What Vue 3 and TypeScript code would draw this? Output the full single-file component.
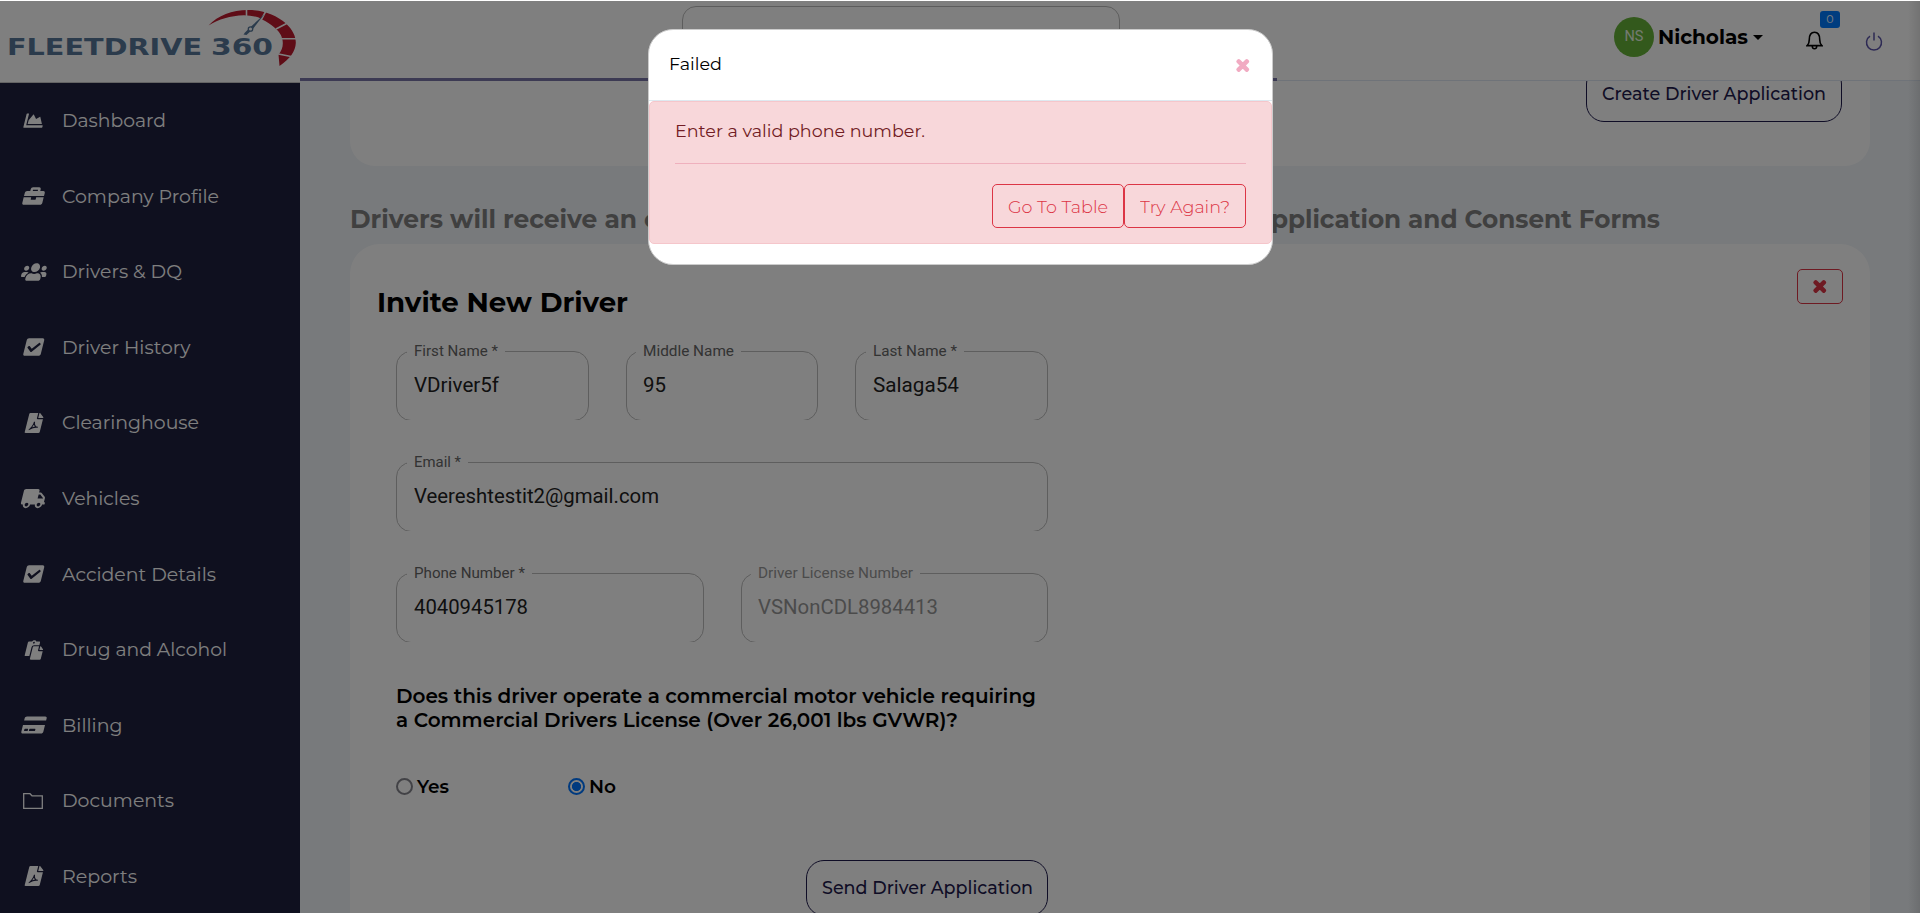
<script setup lang="ts">
import { ref } from 'vue'

type Shape = { box: string; width: number; height: number; paths: string[]; marks?: string; slant: boolean; line?: boolean }
type NavItem = { label: string; width: number; icon: string }

// Sets a run of text to a given advance width.
const vFit = {
  mounted(el: HTMLElement, binding: { value: number }) {
    const natural = el.getBoundingClientRect().width
    if (!natural) return
    el.style.transform = `scaleX(${binding.value / natural})`
    el.style.marginRight = `${binding.value - natural}px`
  },
}

const pdf: Shape = {
  box: '0 0 384 512', width: 15, height: 20, slant: true,
  paths: [
    'M224 136V0H24C10.7 0 0 10.7 0 24v464c0 13.3 10.7 24 24 24h336c13.300 0 24-10.700 24-24V160H248c-13.200 0-24-10.800-24-24z',
    'M384 121.900v6.100H256V0h6.100c6.400 0 12.500 2.500 17 7l97.900 98c4.500 4.500 7 10.600 7 16.900z',
  ],
  marks: 'M88 432c40-20 100-118 96-208 6 90 60 148 120 142-70-12-130 2-200 50',
}

const icons: Record<string, Shape> = {
  pdf,
  chart: {
    box: '0 0 512 512', width: 19, height: 19, slant: true,
    paths: ['M500 384c6.600 0 12 5.400 12 12v40c0 6.600-5.400 12-12 12H12c-6.600 0-12-5.400-12-12V76c0-6.600 5.400-12 12-12h40c6.600 0 12 5.400 12 12v308h436zM372.700 159.500L288 216l-85.300-113.700c-5.100-6.800-15.500-6.300-19.900 1L96 248v104h384l-89.900-187.800c-3.200-6.500-11.400-8.700-17.400-4.700z'],
  },
  briefcase: {
    box: '0 0 512 512', width: 20, height: 20, slant: true,
    paths: ['M320 336c0 8.840-7.160 16-16 16h-96c-8.840 0-16-7.160-16-16v-48H0v144c0 25.600 22.400 48 48 48h416c25.600 0 48-22.400 48-48V288H320v48zm144-208h-80V80c0-25.600-22.400-48-48-48H176c-25.600 0-48 22.400-48 48v48H48c-25.600 0-48 22.400-48 48v80h512v-80c0-25.600-22.400-48-48-48zm-144 0H192V96h128v32z'],
  },
  users: {
    box: '0 0 640 512', width: 25, height: 20, slant: true,
    paths: ['M96 224c35.300 0 64-28.700 64-64s-28.700-64-64-64-64 28.700-64 64 28.700 64 64 64zm448 0c35.300 0 64-28.700 64-64s-28.700-64-64-64-64 28.700-64 64 28.700 64 64 64zm32 32h-64c-17.600 0-33.500 7.100-45.100 18.600 40.300 22.100 68.900 62 75.100 109.400h66c17.700 0 32-14.300 32-32v-32c0-35.300-28.700-64-64-64zm-256 0c61.900 0 112-50.100 112-112S381.900 32 320 32 208 82.100 208 144s50.100 112 112 112zm76.800 32h-8.300c-20.800 10-43.900 16-68.500 16s-47.600-6-68.500-16h-8.300C179.600 288 128 339.600 128 403.200V432c0 26.500 21.500 48 48 48h288c26.500 0 48-21.500 48-48v-28.800c0-63.600-51.600-115.200-115.200-115.200zm-223.700-13.400C161.500 263.100 145.600 256 128 256H64c-35.300 0-64 28.700-64 64v32c0 17.700 14.300 32 32 32h65.900c6.300-47.400 34.900-87.300 75.200-109.400z'],
  },
  check: {
    box: '0 0 448 512', width: 17.5, height: 20, slant: true,
    paths: ['M400 480H48c-26.510 0-48-21.490-48-48V80c0-26.510 21.490-48 48-48h352c26.510 0 48 21.490 48 48v352c0 26.510-21.490 48-48 48zm-204.686-98.059l184-184c6.248-6.248 6.248-16.379 0-22.627l-22.627-22.627c-6.248-6.248-16.379-6.249-22.628 0L184 302.745l-70.059-70.059c-6.248-6.248-16.379-6.248-22.628 0l-22.627 22.627c-6.248 6.248-6.248 16.379 0 22.627l104 104c6.249 6.250 16.379 6.250 22.628.001z'],
  },
  truck: {
    box: '0 0 640 512', width: 24, height: 19.200, slant: true,
    paths: ['M624 352h-16V243.900c0-12.700-5.100-24.900-14.100-33.900L494 110.100c-9-9-21.200-14.100-33.900-14.100H416V48c0-26.500-21.500-48-48-48H48C21.500 0 0 21.500 0 48v320c0 26.500 21.500 48 48 48h16c0 53 43 96 96 96s96-43 96-96h128c0 53 43 96 96 96s96-43 96-96h48c8.800 0 16-7.200 16-16v-32c0-8.800-7.200-16-16-16zM160 464c-26.500 0-48-21.500-48-48s21.500-48 48-48 48 21.500 48 48-21.500 48-48 48zm320 0c-26.500 0-48-21.500-48-48s21.500-48 48-48 48 21.500 48 48-21.500 48-48 48zm80-208H416V144h44.100l99.900 99.900V256z'],
  },
  paste: {
    box: '0 0 448 512', width: 17, height: 20, slant: true,
    paths: ['M128 184c0-30.879 25.122-56 56-56h136V56c0-13.255-10.745-24-24-24h-80.610C204.306 12.890 183.637 0 160 0s-44.306 12.890-55.390 32H24C10.745 32 0 42.745 0 56v336c0 13.255 10.745 24 24 24h104V184zm32-144c13.255 0 24 10.745 24 24s-10.745 24-24 24-24-10.745-24-24 10.745-24 24-24zm184 248h104v200c0 13.255-10.745 24-24 24H184c-13.255 0-24-10.745-24-24V184c0-13.255 10.745-24 24-24h136v104c0 13.200 10.800 24 24 24zm104-38.059V256h-96v-96h6.059a24 24 0 0 1 16.970 7.029l65.941 65.941a24.002 24.002 0 0 1 7.030 16.971z'],
  },
  card: {
    box: '0 0 576 512', width: 22, height: 20, slant: true,
    paths: ['M0 432c0 26.500 21.500 48 48 48h480c26.500 0 48-21.500 48-48V256H0v176zm192-68c0-6.600 5.400-12 12-12h136c6.600 0 12 5.400 12 12v40c0 6.600-5.400 12-12 12H204c-6.600 0-12-5.400-12-12v-40zm-128 0c0-6.600 5.400-12 12-12h72c6.600 0 12 5.400 12 12v40c0 6.600-5.400 12-12 12H76c-6.600 0-12-5.400-12-12v-40zM576 80v60H0V80c0-26.500 21.500-48 48-48h480c26.500 0 48 21.500 48 48z'],
  },
  folder: { box: '0 0 20 16', width: 20, height: 16, slant: false, line: true, paths: ['M.7.700h6.300l2 2.100h10.300v12.500H.7z'] },
}

const nav: NavItem[] = [
  { label: 'Dashboard', width: 104, icon: 'chart' },
  { label: 'Company Profile', width: 157, icon: 'briefcase' },
  { label: 'Drivers & DQ', width: 120, icon: 'users' },
  { label: 'Driver History', width: 128.500, icon: 'check' },
  { label: 'Clearinghouse', width: 137, icon: 'pdf' },
  { label: 'Vehicles', width: 77.500, icon: 'truck' },
  { label: 'Accident Details', width: 154, icon: 'check' },
  { label: 'Drug and Alcohol', width: 165, icon: 'paste' },
  { label: 'Billing', width: 60.500, icon: 'card' },
  { label: 'Documents', width: 112, icon: 'folder' },
  { label: 'Reports', width: 75, icon: 'pdf' },
]

const rows = [
  [
    { label: 'First Name *', value: 'VDriver5f', span: 'third', lw: 84, vw: 85 },
    { label: 'Middle Name', value: '95', span: 'third', lw: 91, vw: 23 },
    { label: 'Last Name *', value: 'Salaga54', span: 'third', lw: 84, vw: 86 },
  ],
  [{ label: 'Email *', value: 'Veereshtestit2@gmail.com', span: 'full', lw: 47, vw: 245 }],
  [
    { label: 'Phone Number *', value: '4040945178', span: 'half', lw: 111, vw: 114 },
    { label: 'Driver License Number', value: 'VSNonCDL8984413', span: 'half', lw: 155, vw: 180, muted: true },
  ],
]

const commercial = ref<'yes' | 'no'>('no')
const cross = 'M242.720 256l100.070-100.070c12.280-12.280 12.280-32.190 0-44.480l-22.240-22.240c-12.280-12.280-32.190-12.280-44.480 0L176 189.280 75.930 89.210c-12.280-12.280-32.190-12.280-44.480 0L9.210 111.450c-12.280 12.280-12.280 32.190 0 44.480L109.280 256 9.210 356.070c-12.280 12.280-12.280 32.190 0 44.480l22.240 22.240c12.280 12.280 32.200 12.280 44.480 0L176 322.720l100.070 100.070c12.280 12.280 32.200 12.280 44.480 0l22.240-22.240c12.280-12.280 12.280-32.190 0-44.480L242.720 256z'
</script>

<template>
  <div class="app">
    <aside class="sidebar">
      <div class="brand">
        <svg class="logo" width="300" height="82" viewBox="0 0 300 82">
          <g class="wordmark">
            <text x="7" y="54.500" textLength="195" lengthAdjust="spacingAndGlyphs">FLEETDRIVE</text>
            <text x="211" y="54.500" textLength="62" lengthAdjust="spacingAndGlyphs">360</text>
          </g>
          <path class="dial" d="M208.500 25.500C218 15.500 232 10 248 10C263 10 276 15 286 23.500C293 30 296 37 295.800 43C295.500 51 290 59 279.500 66L278.500 54.500C282 50 283.500 46 282.500 40C281.500 35 279.500 32 275 28C271 24.500 267 21.500 261 19C258 16.500 250 15.500 244 15.200C230 15.800 219 19 208.500 25.500Z" />
          <path class="ticks" d="M246.500 8V18M267 9L260 22M288.500 22.500L276 29M298 38.800H281M291 56.500L276 53.500" />
          <path class="needle" d="M264.500 14L252.500 29.500L246.500 35L243.500 34.500L245 32.500L250 27.500Z" />
          <circle class="pivot" cx="250.500" cy="29" r="2.200" />
        </svg>
      </div>
      <nav class="menu">
        <a v-for="item in nav" :key="item.label" class="menu-item">
          <span class="menu-icon">
            <svg :class="{ slant: icons[item.icon].slant, line: icons[item.icon].line }" :width="icons[item.icon].width" :height="icons[item.icon].height" :viewBox="icons[item.icon].box">
              <path v-for="d in icons[item.icon].paths" :key="d" :d="d" />
              <path v-if="icons[item.icon].marks" class="mark" :d="icons[item.icon].marks" />
            </svg>
          </span>
          <span v-fit="item.width" class="run">{{ item.label }}</span>
        </a>
      </nav>
    </aside>

    <div class="main">
      <header class="topbar">
        <div class="search"></div>
        <div class="account">
          <span class="avatar">NS</span>
          <span class="user"><span v-fit="90" class="run">Nicholas</span></span>
          <span class="caret"></span>
          <span class="bell">
            <svg width="17" height="19" viewBox="0 0 17 19"><path d="M1.200 14.600C3 13 3.300 11.500 3.300 8.500C3.300 4 5 1.200 8.500 1.200S13.700 4 13.700 8.500C13.700 11.500 14 13 15.800 14.600ZM6.300 15.500C6.500 18.500 10.500 18.500 10.700 15.500" /></svg>
            <span class="count">0</span>
          </span>
          <svg class="power" width="18" height="19" viewBox="0 0 18 19"><path d="M9 .500V8.500M5 4.200A7.500 7.500 0 1 0 13 4.200" /></svg>
        </div>
        <div class="progress"></div>
      </header>

      <div class="content">
        <section class="card upper">
          <button class="pill"><span v-fit="224" class="run">Create Driver Application</span></button>
        </section>

        <h2 class="lead">
          <span v-fit="287" class="run">Drivers will receive an</span>
          <span>email to complete the</span>
          <span v-fit="408" class="run end">Application and Consent Forms</span>
        </h2>

        <section class="card invite">
          <div class="invite-head">
            <h1><span v-fit="251" class="run">Invite New Driver</span></h1>
            <button class="dismiss"><svg width="11.500" height="17" viewBox="0 0 352 512"><path :d="cross" /></svg></button>
          </div>
          <form class="form">
            <div v-for="(row, i) in rows" :key="i" class="row">
              <div v-for="field in row" :key="field.label" class="field" :class="[field.span, { muted: field.muted }]">
                <div class="clip"><div class="outline"></div></div>
                <label><span v-fit="field.lw" class="run">{{ field.label }}</span></label>
                <div class="value"><span v-fit="field.vw" class="run">{{ field.value }}</span></div>
              </div>
            </div>
            <div class="question">
              <div><span v-fit="640" class="run">Does this driver operate a commercial motor vehicle requiring</span></div>
              <div><span v-fit="562" class="run">a Commercial Drivers License (Over 26,001 lbs GVWR)?</span></div>
            </div>
            <div class="choices">
              <label @click="commercial = 'yes'"><i class="radio" :class="{ on: commercial === 'yes' }"></i><span v-fit="32" class="run">Yes</span></label>
              <label @click="commercial = 'no'"><i class="radio" :class="{ on: commercial === 'no' }"></i><span v-fit="27" class="run">No</span></label>
            </div>
            <div class="submit">
              <button type="button" class="pill"><span v-fit="211" class="run">Send Driver Application</span></button>
            </div>
          </form>
        </section>
      </div>
    </div>

    <div class="backdrop"></div>
    <div class="modal">
      <div class="modal-head">
        <span v-fit="53" class="run">Failed</span>
        <svg width="11.500" height="17" viewBox="0 0 352 512"><path :d="cross" /></svg>
      </div>
      <div class="alert">
        <p><span v-fit="250" class="run">Enter a valid phone number.</span></p>
        <div class="actions">
          <button class="go"><span v-fit="100" class="run">Go To Table</span></button>
          <button class="retry"><span v-fit="90" class="run">Try Again?</span></button>
        </div>
      </div>
    </div>
  </div>
</template>

<style>
body { margin: 0; overflow: hidden; }
</style>

<style scoped>
* { box-sizing: border-box; }
.app {
  position: relative;
  display: flex;
  width: 1920px;
  height: 913px;
  overflow: hidden;
  background: #f0f4f8;
  color: #000;
  font-family: Montserrat, Inter, "Liberation Sans", sans-serif;
  font-size: 17.600px;
}
button { font: inherit; margin: 0; padding: 0; background: transparent; }
h1, h2, p { margin: 0; }
.run { display: inline-block; white-space: nowrap; transform-origin: left center; }

.sidebar { width: 300px; flex: none; background: #1e203e; }
.brand { height: 83px; background: #fff; border-bottom: 1px solid #c8c8c8; }
.logo { display: block; }
.wordmark { font: 700 23px "DejaVu Sans", sans-serif; fill: #567799; }
.dial { fill: #be1a2e; }
.ticks { fill: none; stroke: #fff; stroke-width: 1.600; }
.needle { fill: #567799; }
.pivot { fill: #fff; stroke: #567799; stroke-width: 1.300; }
.menu { display: flex; flex-direction: column; }
.menu-item { display: flex; align-items: center; height: 75.600px; padding-bottom: .600px; font-size: 18.500px; color: #fff; }
.menu-icon { display: flex; justify-content: center; width: 25px; margin: 0 15.500px 0 21.500px; flex: none; fill: #fff; }
.menu-icon svg { overflow: visible; flex: none; }
.slant { transform: skewX(-14deg); }
.line { fill: none; stroke: #fff; stroke-width: 1.300; transform: translateX(-1px); }
.mark { fill: none; stroke: #1e203e; stroke-width: 28; }

.main { flex: 1; min-width: 0; }
.topbar { position: relative; height: 81px; background: #fff; border-bottom: 1px solid #dfe6f2; display: flex; justify-content: flex-end; z-index: 1; }
.progress { position: absolute; left: 0; bottom: -1px; width: 977px; height: 3px; background: #7975a6; }
.search { position: absolute; left: 382px; top: 6px; width: 438px; height: 50px; border: 1px solid #bbb; border-radius: 14px; }
.account { display: flex; align-items: center; height: 74px; padding-right: 37px; }
.avatar { display: flex; align-items: center; justify-content: center; width: 40px; height: 40px; border-radius: 50%; background: #66b338; color: #e9f5e2; font: 14.500px Roboto, sans-serif; padding-bottom: 2px; }
.user { margin-left: 4px; padding-bottom: 2px; font-size: 20.800px; font-weight: 700; }
.caret { margin-left: 5px; border: 5px solid transparent; border-top-color: #000; border-bottom: 0; }
.bell { position: relative; display: flex; margin: 7px 42.500px 0 42.500px; }
.bell path, .power path { fill: none; stroke: #000; stroke-width: 1.600; }
.count { position: absolute; left: 14.500px; top: -20.500px; width: 20px; height: 17px; border-radius: 3px; background: #007bff; color: #fff; font-size: 11px; line-height: 17px; text-align: center; }
.power { margin-top: 8px; }
.power path { stroke: #5b54a8; stroke-width: 1.500; }

.content { padding: 0 50px; }
.card { background: #fff; }
.upper { height: 85px; border-radius: 0 0 25px 25px; padding: 0 28px; display: flex; justify-content: flex-end; }
.upper .pill { width: 256px; margin-top: -15px; }
.pill { height: 56px; border: 1px solid #1f1b4d; border-radius: 18px; color: #1f1b4d; font-weight: 500; display: flex; align-items: center; justify-content: center; padding-bottom: 2px; }
.lead { display: flex; width: 1310px; margin-top: 37px; height: 41px; line-height: 32px; gap: 7px; font-size: 26px; font-weight: 700; color: #808080; white-space: nowrap; }
.end { margin-left: auto; }
.invite { height: 720px; border-radius: 30px; padding: 25px 27px 0; }
.invite-head { display: flex; justify-content: space-between; height: 74px; }
.invite-head h1 { line-height: 34px; margin: 16px 0 0; font-size: 28px; font-weight: 700; }
.dismiss { width: 46px; height: 35px; border: 1px solid #dc3545; border-radius: 5px; display: flex; align-items: center; justify-content: center; fill: #dc3545; stroke: #dc3545; stroke-width: 42; }
.dismiss svg, .modal-head svg { overflow: visible; }
.form { width: 652px; margin-left: 19px; padding-top: 8px; }
.row { display: flex; gap: 37px; height: 69px; margin-bottom: 42px; }
.field { position: relative; flex: 1; font-family: Roboto, sans-serif; color: #212121; }
.clip { height: 69px; overflow: hidden; }
.outline { height: 70px; border: 1px solid #bcbcbc; border-radius: 15px; }
.field label { position: absolute; left: 10.500px; top: -9px; padding: 0 7px; background: #fff; line-height: 18px; font-size: 15px; color: #666; }
.value { position: absolute; left: 17.500px; top: 22px; line-height: 24px; font-size: 20px; }
.muted .value, .muted label { color: #979797; }
.question { margin-top: 38px; height: 48px; font-size: 20px; font-weight: 600; line-height: 24px; }
.choices { display: flex; margin-top: 42px; height: 24px; font-weight: 600; }
.choices label { display: flex; align-items: center; width: 172px; }
.radio { width: 17px; height: 17px; margin-right: 4px; border: 2px solid #85858d; border-radius: 50%; flex: none; }
.radio.on { border-color: #0075ff; background: radial-gradient(circle, #0075ff 4.200px, #fff 5px); }
.submit { display: flex; justify-content: flex-end; margin-top: 62px; }
.submit .pill { width: 242px; }

.backdrop { position: absolute; z-index: 2; inset: 1px 0 0; background: linear-gradient(to left, rgba(0,0,0,.100), transparent 12px), rgba(0,0,0,.500); }
.modal { position: absolute; z-index: 3; left: 648px; top: 29px; width: 625px; height: 236px; border: 1px solid #ccc; border-radius: 25px; background: #fff; overflow: hidden; }
.modal-head { height: 71px; border-bottom: 1px solid #dee9f0; display: flex; align-items: center; justify-content: space-between; padding: 0 24px 4px 20px; }
.modal-head svg { fill: #f1abc2; stroke: #f1abc2; stroke-width: 42; margin-top: 5px; }
.alert { height: 143px; border: 1px solid #f5c6cb; border-radius: 5px; background: #f8d7da; padding: 0 25px; color: #721c24; }
.alert p { height: 62px; line-height: 58px; border-bottom: 1px solid #efb0bd; }
.actions { display: flex; justify-content: flex-end; margin-top: 20px; }
.actions button { height: 44px; border: 1px solid #dc3545; border-radius: 5px; color: #dc3545; font-weight: 300; padding-top: 1px; }
.go { width: 132px; }
.retry { width: 122px; }
</style>
